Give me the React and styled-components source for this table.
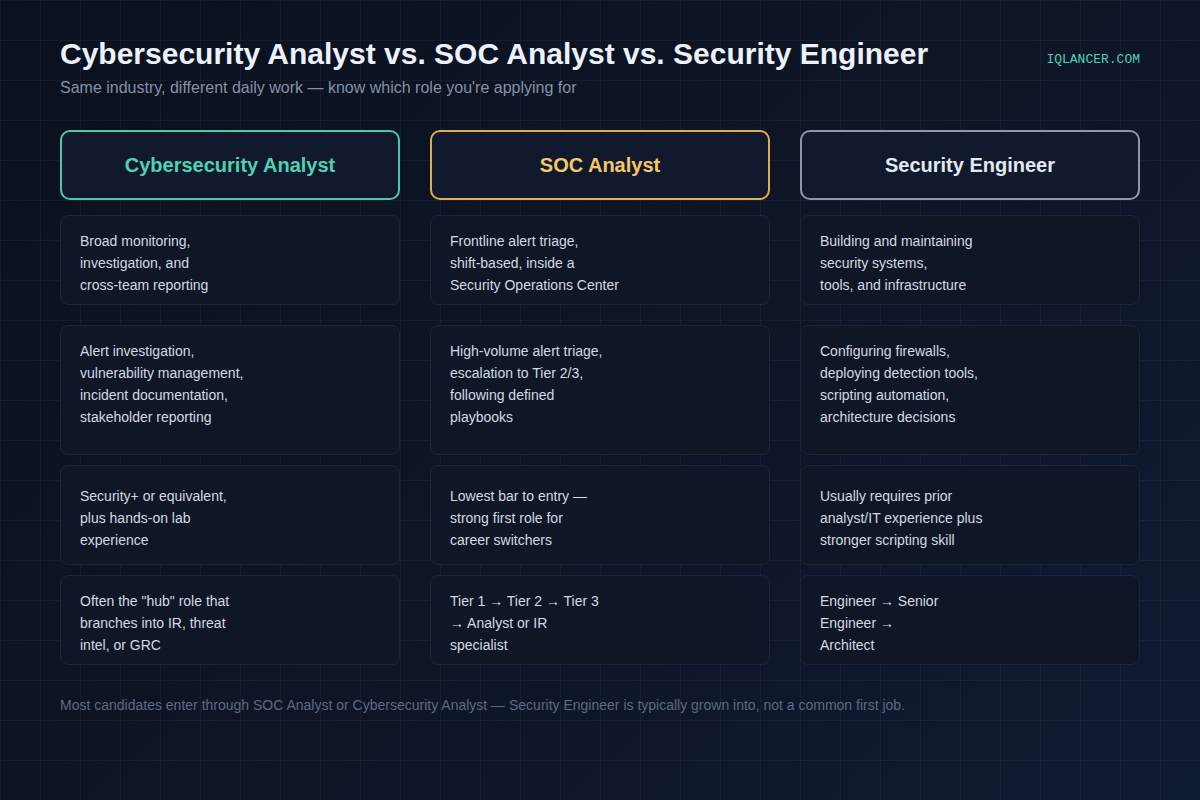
import React from 'react';
import styled, { createGlobalStyle } from 'styled-components';

const GlobalStyle = createGlobalStyle`
  html, body {
    margin: 0;
    padding: 0;
    background: #0b1120;
  }
  * {
    box-sizing: border-box;
  }
`;

const Page = styled.div`
  width: 1200px;
  height: 800px;
  overflow: hidden;
  padding: 36px 60px 0;
  font-family: "Liberation Sans", Arial, sans-serif;
  background-color: #0b1120;
  background-image:
    linear-gradient(rgba(148, 163, 184, 0.07) 1px, transparent 1px),
    linear-gradient(90deg, rgba(148, 163, 184, 0.07) 1px, transparent 1px),
    linear-gradient(135deg, #0a101d 0%, #0d1526 50%, #0f1a33 100%);
  background-size: 40px 40px, 40px 40px, 100% 100%;
  background-position: 0 0, 0 0, 0 0;
`;

const Header = styled.header`
  display: flex;
  justify-content: space-between;
  align-items: flex-start;
`;

const Title = styled.h1`
  margin: 0;
  font-size: 30px;
  line-height: 36px;
  font-weight: 700;
  color: #ecf1fb;
`;

const Subtitle = styled.p`
  margin: 6px 0 0;
  font-size: 16px;
  line-height: 20px;
  color: #8591a7;
`;

const Brand = styled.div`
  margin-top: 16px;
  font-family: "Liberation Mono", "DejaVu Sans Mono", monospace;
  font-size: 13px;
  letter-spacing: 0;
  color: #4fd1b5;
`;

const Columns = styled.div`
  display: grid;
  grid-template-columns: repeat(3, 340px);
  column-gap: 30px;
  margin-top: 32px;
`;

const Column = styled.div`
  display: flex;
  flex-direction: column;
`;

const RoleHead = styled.div`
  height: 70px;
  display: flex;
  align-items: center;
  justify-content: center;
  border: 2px solid ${(p) => p.$accent};
  border-radius: 10px;
  background: #101a2c;
  font-size: 20px;
  font-weight: 700;
  color: ${(p) => p.$text};
`;

const Cell = styled.div`
  height: ${(p) => p.$h}px;
  margin-top: ${(p) => p.$gap}px;
  padding: ${(p) => p.$pad}px 19px 0;
  border: 1px solid #1c2639;
  border-radius: 8px;
  background: #0f1727;
  font-size: 14px;
  line-height: 22px;
  color: #d3d9e4;
`;

const Line = styled.div`
  white-space: nowrap;
`;

const Footnote = styled.p`
  margin: 31px 0 0;
  font-size: 14px;
  line-height: 18px;
  color: #5d6a82;
`;

const rows = [
  { h: 90, gap: 15, pad: 14 },
  { h: 130, gap: 20, pad: 14 },
  { h: 100, gap: 10, pad: 19 },
  { h: 90, gap: 10, pad: 14 },
];

const roles = [
  {
    name: 'Cybersecurity Analyst',
    accent: '#4cc7ad',
    text: '#4fd1b3',
    cells: [
      ['Broad monitoring,', 'investigation, and', 'cross-team reporting'],
      ['Alert investigation,', 'vulnerability management,', 'incident documentation,', 'stakeholder reporting'],
      ['Security+ or equivalent,', 'plus hands-on lab', 'experience'],
      ['Often the "hub" role that', 'branches into IR, threat', 'intel, or GRC'],
    ],
  },
  {
    name: 'SOC Analyst',
    accent: '#e0ac4e',
    text: '#f4c76a',
    cells: [
      ['Frontline alert triage,', 'shift-based, inside a', 'Security Operations Center'],
      ['High-volume alert triage,', 'escalation to Tier 2/3,', 'following defined', 'playbooks'],
      ['Lowest bar to entry —', 'strong first role for', 'career switchers'],
      ['Tier 1 → Tier 2 → Tier 3', '→ Analyst or IR', 'specialist'],
    ],
  },
  {
    name: 'Security Engineer',
    accent: '#8c97ad',
    text: '#e3e8f1',
    cells: [
      ['Building and maintaining', 'security systems,', 'tools, and infrastructure'],
      ['Configuring firewalls,', 'deploying detection tools,', 'scripting automation,', 'architecture decisions'],
      ['Usually requires prior', 'analyst/IT experience plus', 'stronger scripting skill'],
      ['Engineer → Senior', 'Engineer →', 'Architect'],
    ],
  },
];

export default function App() {
  return (
    <Page>
      <GlobalStyle />
      <Header>
        <div>
          <Title>Cybersecurity Analyst vs. SOC Analyst vs. Security Engineer</Title>
          <Subtitle>Same industry, different daily work — know which role you're applying for</Subtitle>
        </div>
        <Brand>IQLANCER.COM</Brand>
      </Header>
      <Columns>
        {roles.map((role) => (
          <Column key={role.name}>
            <RoleHead $accent={role.accent} $text={role.text}>
              {role.name}
            </RoleHead>
            {role.cells.map((lines, i) => (
              <Cell key={i} $h={rows[i].h} $gap={rows[i].gap} $pad={rows[i].pad}>
                {lines.map((l) => (
                  <Line key={l}>{l}</Line>
                ))}
              </Cell>
            ))}
          </Column>
        ))}
      </Columns>
      <Footnote>
        Most candidates enter through SOC Analyst or Cybersecurity Analyst — Security Engineer is typically grown into, not a common first job.
      </Footnote>
    </Page>
  );
}
